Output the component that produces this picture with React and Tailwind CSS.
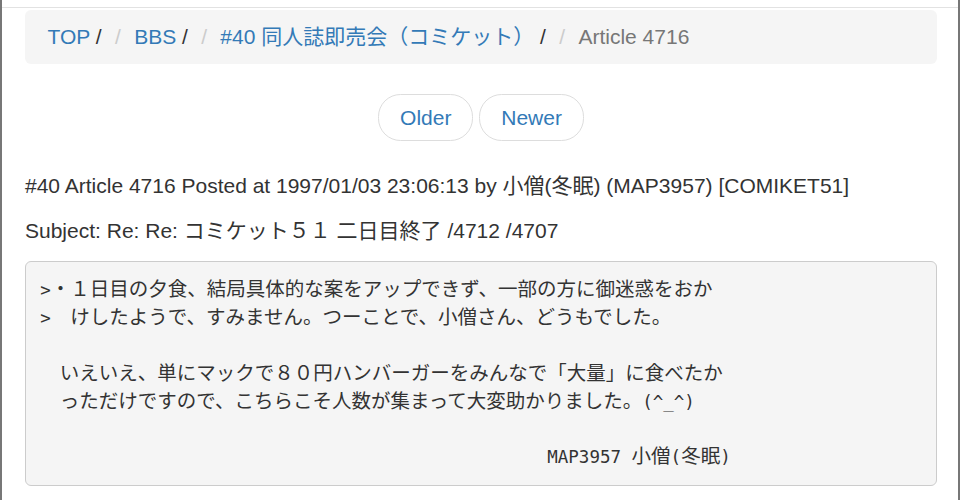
import React from 'react';

const sans = "font-['Liberation_Sans','Noto_Sans_CJK_JP',sans-serif]";
const mono = "font-['DejaVu_Sans_Mono','Noto_Sans_CJK_JP',monospace]";

// half-width glyphs in the quoted post are narrower than DejaVu at 19.5px
function A({ children }) {
  return <span className="text-[17.5px]">{children}</span>;
}

function Sep() {
  return <span className="px-[7.5px] text-[#ccc]">/{'\u00a0'}</span>;
}

export default function App() {
  return (
    <div className={`min-h-screen bg-white border-x-2 border-[#777] text-[21px] leading-[30px] text-[#333] ${sans}`}>
      <div className="h-[8px] border-b border-[#e2e2e2]"></div>
      <div className="pl-[23px] pr-[21px] pt-[2px]">
        <div className="rounded-[6px] bg-[#f5f5f5] px-[22.5px] py-[12px] whitespace-nowrap">
          <span><a className="text-[#337ab7]">TOP</a> /</span>{' '}
          <span><Sep /><a className="text-[#337ab7]">BBS</a> /</span>{' '}
          <span><Sep /><a className="text-[#337ab7]">#40 同人誌即売会（コミケット）</a> /</span>{' '}
          <span className="text-[#777]"><Sep />Article 4716</span>
        </div>

        <div className="my-[30px] text-center">
          <a className="inline-block rounded-[22.5px] border border-[#ddd] bg-white px-[21px] py-[7.5px] text-[#337ab7]">Older</a>{' '}
          <a className="inline-block rounded-[22.5px] border border-[#ddd] bg-white px-[21px] py-[7.5px] text-[#337ab7]">Newer</a>
        </div>

        <p className="mb-[15px]">#40 Article 4716 Posted at 1997/01/03 23:06:13 by 小僧(冬眠) (MAP3957) [COMIKET51]</p>
        <p className="mb-[15px]">Subject: Re: Re: コミケット５１ 二日目終了 /4712 /4707</p>

        <pre className={`mb-[15px] rounded-[6px] border border-[#ccc] bg-[#f5f5f5] p-[14.25px] text-[19.5px] leading-[1.42857] text-[#333] whitespace-pre-wrap break-all ${mono}`}>
          <A>{'>'}</A>{'・１日目の夕食、結局具体的な案をアップできず、一部の方に御迷惑をおか\n'}
          <A>{'>'}</A>{'　けしたようで、すみません。つーことで、小僧さん、どうもでした。\n'}
          {'\n'}
          {'　いえいえ、単にマックで８０円ハンバーガーをみんなで「大量」に食べたか\n'}
          {'　っただけですので、こちらこそ人数が集まって大変助かりました。'}<A>{'(^_^)'}</A>{'\n'}
          {'\n'}
          {'　　　　　　　　　　　　　　　　　　　　　　　　　　'}<A>{'MAP3957 '}</A>{'小僧'}<A>(</A>{'冬眠'}<A>)</A>
        </pre>
      </div>
    </div>
  );
}
